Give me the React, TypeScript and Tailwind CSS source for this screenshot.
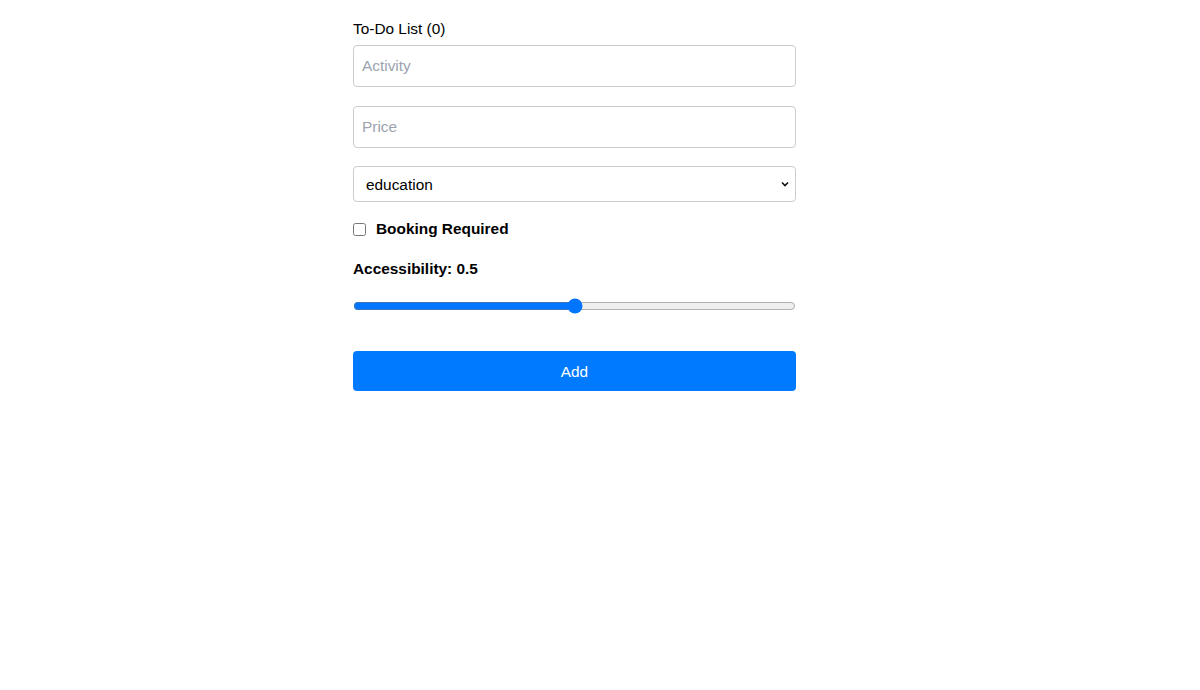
import React, { useState } from 'react';

const App: React.FC = () => {
  const [activity, setActivity] = useState('');
  const [price, setPrice] = useState('');
  const [type, setType] = useState('education');
  const [booking, setBooking] = useState(false);
  const [access, setAccess] = useState(0.5);

  return (
    <div className="min-h-screen bg-white font-['Liberation_Sans',Arial,sans-serif] text-black">
      <div className="mx-auto w-[500px] pl-[3px]">
        <div className="w-[443px] pt-[20px]">
          <div className="text-[15.4px] leading-[18px]">To-Do List (0)</div>

          <input
            value={activity}
            onChange={(e) => setActivity(e.target.value)}
            placeholder="Activity"
            className="mt-[7px] block h-[42px] w-full rounded-[4px] border border-[#cccccc] px-[8px] text-[15.4px] outline-none placeholder:text-[#9ca3af]"
          />
          <input
            value={price}
            onChange={(e) => setPrice(e.target.value)}
            placeholder="Price"
            className="mt-[19px] block h-[42px] w-full rounded-[4px] border border-[#cccccc] px-[8px] text-[15.4px] outline-none placeholder:text-[#9ca3af]"
          />
          <div className="relative mt-[18px]">
            <select
              value={type}
              onChange={(e) => setType(e.target.value)}
              className="block h-[36px] w-full appearance-none rounded-[4px] border border-[#cccccc] bg-white pl-[12px] pt-[1px] text-[15.4px] outline-none"
            >
              <option value="education">education</option>
              <option value="recreational">recreational</option>
              <option value="social">social</option>
              <option value="diy">diy</option>
              <option value="charity">charity</option>
              <option value="cooking">cooking</option>
              <option value="relaxation">relaxation</option>
              <option value="music">music</option>
              <option value="busywork">busywork</option>
            </select>
            <svg
              className="pointer-events-none absolute right-[6px] top-1/2 -translate-y-1/2"
              width="10"
              height="10"
              viewBox="0 0 10 10"
              fill="none"
              stroke="#111"
              strokeWidth="1.6"
            >
              <polyline points="2,3.5 5,6.5 8,3.5" />
            </svg>
          </div>

          <label className="mt-[18px] flex h-[18px] items-center">
            <input
              type="checkbox"
              checked={booking}
              onChange={(e) => setBooking(e.target.checked)}
              className="h-[13px] w-[13px]"
            />
            <span className="ml-[10px] text-[15.4px] font-bold leading-[18px]">Booking Required</span>
          </label>

          <div className="mt-[22px] text-[15.4px] font-bold leading-[18px]">Accessibility: {access}</div>

          <input
            type="range"
            min={0}
            max={1}
            step={0.1}
            value={access}
            onChange={(e) => setAccess(parseFloat(e.target.value))}
            className="mt-[18px] block h-[20px] w-full accent-[#0075ff]"
          />

          <button className="mt-[35px] block h-[40px] w-full rounded-[4px] bg-[#007bff] pt-[1px] text-[15.4px] text-white">
            Add
          </button>
        </div>
      </div>
    </div>
  );
};

export default App;
